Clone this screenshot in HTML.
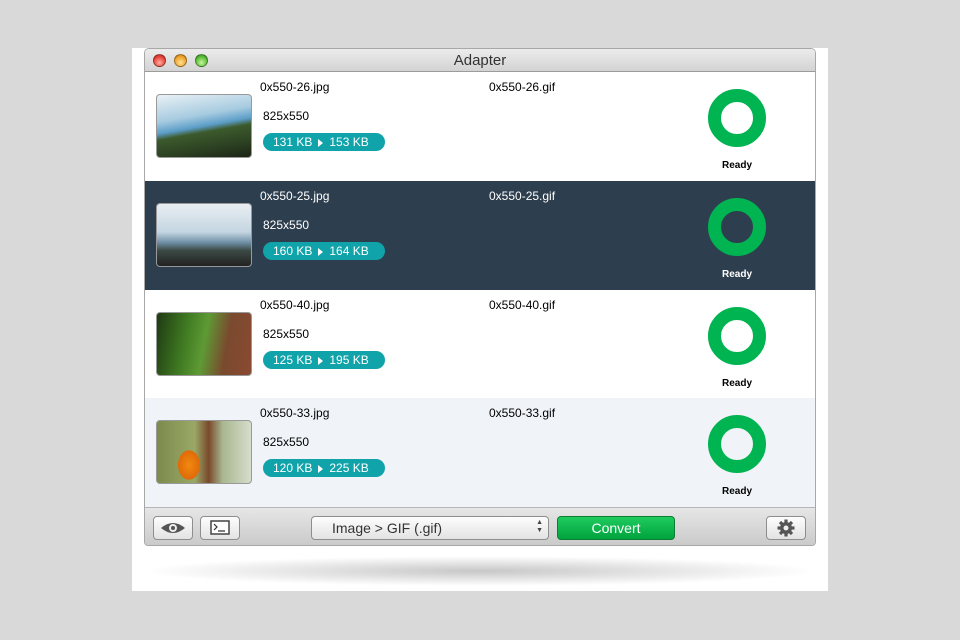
<!DOCTYPE html>
<html><head><meta charset="utf-8"><style>
*{margin:0;padding:0;box-sizing:border-box}
body{width:960px;height:640px;background:#d9d9d9;position:relative;overflow:hidden;font-family:"Liberation Sans",Arial,sans-serif}
.panel{position:absolute;left:132px;top:48px;width:696px;height:543px;background:#fff}
.shadow{position:absolute;left:140px;top:556px;width:680px;height:30px;border-radius:50%;background:radial-gradient(ellipse at center,rgba(0,0,0,.22),rgba(0,0,0,0) 70%)}
.win{position:absolute;left:144px;top:48px;width:672px;height:498px;border:1px solid #a8a8a8;border-radius:5px 5px 4px 4px;overflow:hidden;background:#fff}
.title{position:absolute;left:0;top:0;width:100%;height:23px;background:linear-gradient(#ececec,#d3d3d3);border-bottom:1px solid #9c9c9c;text-align:center;font-size:15px;line-height:23px;color:#333}
.tl{position:absolute;top:5px;width:13px;height:13px;border-radius:50%;border:1px solid rgba(0,0,0,.35)}
.row{position:absolute;left:0;width:100%;height:109px}
.thumb{position:absolute;left:11px;top:22px;width:96px;height:64px;border-radius:4px;border:1px solid #999;overflow:hidden}
.n1{position:absolute;left:115px;top:8px;font-size:12px}
.n2{position:absolute;left:344px;top:8px;font-size:12px}
.dim{position:absolute;left:118px;top:37px;font-size:12px}
.pill{position:absolute;left:118px;top:61px;width:122px;height:18px;border-radius:9px;background:#10a3a9;color:#fff;font-size:12px;line-height:18px;padding-left:10px;white-space:nowrap}
.pill i{display:inline-block;width:0;height:0;border-left:5px solid #fff;border-top:4px solid transparent;border-bottom:4px solid transparent;margin:0 6px 0 6px;vertical-align:-1px}
.ring{position:absolute;left:562px;top:16px}
.ready{position:absolute;left:560px;top:88px;width:64px;text-align:center;font-size:10px;font-weight:bold}
.dark{background:#2d3e4e;color:#fff}
.tb{position:absolute;left:0;top:458px;width:100%;height:40px;background:linear-gradient(#e6e6e6,#c9c9c9);border-top:1px solid #b5b5b5}
.btn{position:absolute;top:8px;height:24px;border:1px solid #8e8e8e;border-radius:4px;background:linear-gradient(#fdfdfd,#e3e3e3)}
</style></head><body>
<div class="panel"></div>
<div class="shadow"></div>
<div class="win">
 <div class="title">Adapter
  <div class="tl" style="left:8px;background:radial-gradient(circle at 50% 70%,#ffb0a0,#e9463c 60%,#b52a22)"></div>
  <div class="tl" style="left:29px;background:radial-gradient(circle at 50% 70%,#ffe29a,#f0a52c 60%,#c07a12)"></div>
  <div class="tl" style="left:50px;background:radial-gradient(circle at 50% 70%,#c8f5a0,#5cbf3a 60%,#2e8a1e)"></div>
 </div>

 <div class="row" style="top:23px;background:#fff">
  <div class="thumb" style="background:linear-gradient(170deg,#e9f1f6 0%,#a7cbe0 35%,#5b9dc7 50%,#3c5a2c 58%,#2c4022 80%,#1c2414 100%)"></div>
  <div class="n1">0x550-26.jpg</div><div class="n2">0x550-26.gif</div>
  <div class="dim">825x550</div><div class="pill">131 KB<i></i>153 KB</div>
  <svg class="ring" width="60" height="60"><circle cx="30" cy="30" r="22.5" fill="none" stroke="#00b451" stroke-width="13"/></svg>
  <div class="ready">Ready</div>
 </div>
 <div class="row dark" style="top:132px">
  <div class="thumb" style="background:linear-gradient(180deg,#e8eef2 0%,#c5d6e2 45%,#6f8fa6 62%,#3c4a44 75%,#222 100%)"></div>
  <div class="n1">0x550-25.jpg</div><div class="n2">0x550-25.gif</div>
  <div class="dim">825x550</div><div class="pill">160 KB<i></i>164 KB</div>
  <svg class="ring" width="60" height="60"><circle cx="30" cy="30" r="22.5" fill="none" stroke="#00b451" stroke-width="13"/></svg>
  <div class="ready">Ready</div>
 </div>
 <div class="row" style="top:241px;background:#fff">
  <div class="thumb" style="background:linear-gradient(100deg,#1f3a12 0%,#3f7a22 30%,#5e9a34 50%,#7a4a2e 72%,#8a4a32 100%)"></div>
  <div class="n1">0x550-40.jpg</div><div class="n2">0x550-40.gif</div>
  <div class="dim">825x550</div><div class="pill">125 KB<i></i>195 KB</div>
  <svg class="ring" width="60" height="60"><circle cx="30" cy="30" r="22.5" fill="none" stroke="#00b451" stroke-width="13"/></svg>
  <div class="ready">Ready</div>
 </div>
 <div class="row" style="top:349px;background:#f0f4f8">
  <div class="thumb" style="background:radial-gradient(ellipse 18px 24px at 32px 44px,#f08a10,#e06a08 60%,transparent 62%),linear-gradient(90deg,#7c8a4c 0%,#9aa866 40%,#7a4a2c 55%,#a8b890 70%,#d8dccc 100%)"></div>
  <div class="n1">0x550-33.jpg</div><div class="n2">0x550-33.gif</div>
  <div class="dim">825x550</div><div class="pill">120 KB<i></i>225 KB</div>
  <svg class="ring" width="60" height="60"><circle cx="30" cy="30" r="22.5" fill="none" stroke="#00b451" stroke-width="13"/></svg>
  <div class="ready">Ready</div>
 </div>

 <div class="tb">
  <div class="btn" style="left:8px;width:40px"><svg width="40" height="24" style="position:absolute;left:-1px;top:-1px"><path d="M8 12 Q20 2 32 12 Q20 22 8 12Z" fill="#555"/><circle cx="20" cy="12" r="4" fill="#eee"/><circle cx="20" cy="12" r="2" fill="#555"/></svg></div>
  <div class="btn" style="left:55px;width:40px"><svg width="40" height="24" style="position:absolute;left:-1px;top:-1px"><rect x="11" y="5" width="18" height="13" fill="#fff" stroke="#444" stroke-width="1.5"/><path d="M14 8 L17 11 L14 14 M18 15 H25" stroke="#333" fill="none" stroke-width="1.2"/></svg></div>
  <div class="btn" style="left:166px;width:238px;font-size:14px;line-height:22px;padding-left:20px;color:#333">Image &gt; GIF (.gif)<span style="position:absolute;right:5px;top:2px;font-size:7px;line-height:8px;color:#444">▲<br>▼</span></div>
  <div class="btn" style="left:412px;width:118px;background:linear-gradient(#1fcb5e,#00a33e);border-color:#0d7d34;color:#fff;text-align:center;font-size:14px;line-height:22px">Convert</div>
  <div class="btn" style="left:621px;width:40px"><svg width="40" height="24" style="position:absolute;left:-1px;top:-1px"><g transform="translate(20 12)" fill="#555"><circle r="6"/><g><rect x="-1.6" y="-8.5" width="3.2" height="17"/><rect x="-1.6" y="-8.5" width="3.2" height="17" transform="rotate(45)"/><rect x="-1.6" y="-8.5" width="3.2" height="17" transform="rotate(90)"/><rect x="-1.6" y="-8.5" width="3.2" height="17" transform="rotate(135)"/></g><circle r="2.5" fill="#eee"/></g></svg></div>
 </div>
</div>
</body></html>
